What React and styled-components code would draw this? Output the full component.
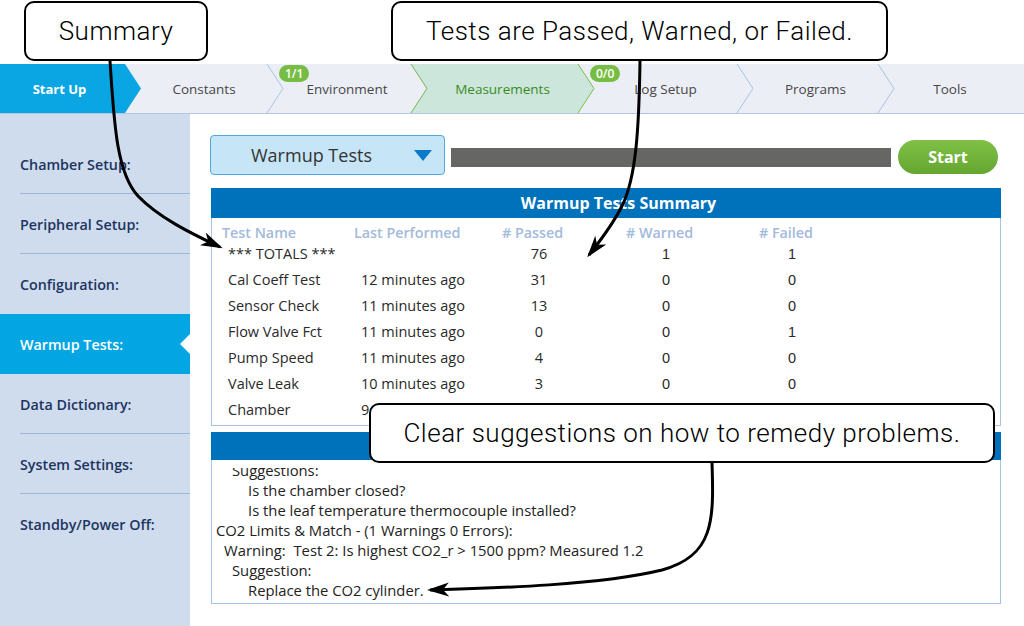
import React from 'react';
import styled, { createGlobalStyle, css } from 'styled-components';

const GlobalStyle = createGlobalStyle`
  * { box-sizing: border-box; }
  body {
    margin: 0;
    background: #fff;
    font-family: "Open Sans", "Liberation Sans", sans-serif;
  }
`;

const Page = styled.div`
  position: relative;
  width: 1024px;
  height: 626px;
  overflow: hidden;
  background: #fff;
`;

const CalloutStrip = styled.div`
  height: 64px;
  display: flex;
  align-items: flex-start;
  gap: 183px;
  padding: 1px 0 0 24px;
`;

const Callout = styled.div`
  width: ${p => p.$w}px;
  height: 60px;
  border: 2px solid #000;
  border-radius: 10px;
  background: #fff;
  display: flex;
  align-items: center;
  justify-content: center;
  font-family: Roboto, "Liberation Sans", sans-serif;
  font-size: 26px;
  font-weight: 300;
  letter-spacing: 0.5px;
  color: #000;
`;

const FloatingCallout = styled(Callout)`
  position: absolute;
  left: 369px;
  top: 403px;
  z-index: 3;
`;

const Arrows = styled.svg`
  position: absolute;
  left: 0;
  top: 0;
  z-index: 2;
  pointer-events: none;
`;

/* ---------- tab bar ---------- */

const TabBar = styled.div`
  display: flex;
  height: 50px;
  background: #eceef6;
  border-bottom: 1px solid #b3c7e2;
`;

const Tab = styled.div`
  position: relative;
  width: ${p => p.$w}px;
  height: 49px;
  display: flex;
  align-items: center;
  justify-content: center;
  padding-left: ${p => (p.$first ? 0 : 16)}px;
  padding-right: ${p => p.$padRight || 0}px;
  font-size: 13.5px;
  color: #474747;
  ${p => p.$kind === 'active' && css`
    color: #fff;
    font-weight: 700;
    font-size: 13px;
  `}
  ${p => p.$kind === 'done' && css`
    color: #3b8a1d;
  `}
`;

const TabShape = styled.svg`
  position: absolute;
  left: 0;
  top: 0;
  overflow: visible;
  pointer-events: none;
`;

const TabLabel = styled.span`
  position: relative;
  z-index: 1;
`;

const Badge = styled.span`
  position: absolute;
  left: 12px;
  top: 1px;
  z-index: 2;
  height: 17px;
  padding: 0 6px;
  border-radius: 9px;
  background: #77bd43;
  color: #fff;
  font-size: 12px;
  font-weight: 600;
  line-height: 17px;
`;

/* ---------- body ---------- */

const Body = styled.div`
  display: flex;
  height: 512px;
`;

const Sidebar = styled.nav`
  width: 190px;
  flex-shrink: 0;
  background: #cfdcee;
  padding-top: 20px;
`;

const SideItem = styled.div`
  position: relative;
  height: 60px;
  display: flex;
  align-items: center;
  padding-left: 20px;
  font-size: 14.3px;
  font-weight: 600;
  color: ${p => (p.$active ? '#fff' : '#1d3460')};
  background: ${p => (p.$active ? '#03a5e3' : 'transparent')};
  ${p => p.$divider && css`
    &::after {
      content: '';
      position: absolute;
      left: 20px;
      right: 0;
      bottom: 0;
      height: 1px;
      background: #9fb5d5;
    }
  `}
  ${p => p.$active && css`
    &::after {
      content: '';
      position: absolute;
      right: 0;
      top: 20px;
      border-right: 10px solid #fff;
      border-top: 10px solid transparent;
      border-bottom: 10px solid transparent;
    }
  `}
`;

const Main = styled.main`
  flex: 1;
  padding: 21px 0 0 20px;
`;

const ControlRow = styled.div`
  display: flex;
  align-items: flex-start;
  height: 40px;
`;

const Dropdown = styled.div`
  width: 235px;
  height: 40px;
  display: flex;
  align-items: center;
  justify-content: space-between;
  padding: 0 12px 0 40px;
  background: #c6e6f8;
  border: 1px solid #4fa9df;
  border-radius: 4px;
  font-size: 18px;
  color: #333;
`;

const Progress = styled.div`
  width: 440px;
  height: 19px;
  margin: 13px 0 0 6px;
  background: #666664;
`;

const StartButton = styled.button`
  width: 100px;
  height: 34px;
  margin: 5px 0 0 7px;
  border: none;
  border-radius: 17px;
  background: linear-gradient(#7fc045, #65a631);
  color: #fff;
  font-family: "Open Sans", sans-serif;
  font-size: 16px;
  font-weight: 700;
`;

const Panel = styled.section`
  width: 790px;
  margin: ${p => p.$top}px 0 0 1px;
`;

const PanelHeader = styled.div`
  height: ${p => p.$h}px;
  display: flex;
  align-items: center;
  justify-content: center;
  padding-left: 25px;
  background: #0072bc;
  color: #fff;
  font-size: 16px;
  font-weight: 700;
`;

const PanelBody = styled.div`
  height: ${p => p.$h}px;
  border: 1px solid #a7c3e4;
  border-top: none;
  overflow: hidden;
  padding: ${p => p.$pad};
`;

const Grid = styled.div`
  display: grid;
  grid-template-columns: 132px 148px 124px 133px 66px;
  padding-left: 9px;
`;

const HeadCell = styled.div`
  height: 17px;
  line-height: 17px;
  font-size: 14.3px;
  font-weight: 600;
  color: #a2badb;
  white-space: nowrap;
`;

const Cell = styled.div`
  height: 26px;
  line-height: 26px;
  font-size: 14.5px;
  color: #2a2a2a;
  white-space: nowrap;
  padding-left: ${p => p.$pad || 0}px;
`;

const Num = styled.span`
  display: inline-block;
  width: ${p => p.$w}px;
  text-align: center;
  font-family: ${p => (p.$arial ? '"Liberation Sans", Arial' : '"Open Sans"')}, sans-serif;
`;

const Viewport = styled.div`
  height: 100%;
  overflow: hidden;
`;

const Lines = styled.div`
  margin-top: -8px;
`;

const Line = styled.div`
  height: 20px;
  line-height: 20px;
  font-size: 14.8px;
  color: #222;
  white-space: pre;
  padding-left: ${p => p.$indent}px;
`;

const tabs = [
  { label: 'Start Up', w: 125, kind: 'active', padRight: 6 },
  { label: 'Constants', w: 142 },
  { label: 'Environment', w: 144, badge: '1/1' },
  { label: 'Measurements', w: 167, kind: 'done' },
  { label: 'Log Setup', w: 159, badge: '0/0' },
  { label: 'Programs', w: 141 },
  { label: 'Tools', w: 146, last: true, padRight: 18 },
];

const sideItems = [
  'Chamber Setup:',
  'Peripheral Setup:',
  'Configuration:',
  'Warmup Tests:',
  'Data Dictionary:',
  'System Settings:',
  'Standby/Power Off:',
];
const activeSide = 3;

const rows = [
  ['*** TOTALS ***', '', 76, 1, 1],
  ['Cal Coeff Test', '12 minutes ago', 31, 0, 0],
  ['Sensor Check', '11 minutes ago', 13, 0, 0],
  ['Flow Valve Fct', '11 minutes ago', 0, 0, 1],
  ['Pump Speed', '11 minutes ago', 4, 0, 0],
  ['Valve Leak', '10 minutes ago', 3, 0, 0],
  ['Chamber', '9 minutes ago', 9, 0, 0],
];

const details = [
  [16, 'Suggestions:'],
  [32, 'Is the chamber closed?'],
  [32, 'Is the leaf temperature thermocouple installed?'],
  [0, 'CO2 Limits & Match - (1 Warnings 0 Errors):'],
  [8, 'Warning:  Test 2: Is highest CO2_r > 1500 ppm? Measured 1.2'],
  [16, 'Suggestion:'],
  [32, 'Replace the CO2 cylinder.'],
];

function TabItem({ tab, first }) {
  const { w, kind, last } = tab;
  let shape = null;
  if (kind === 'active') {
    shape = <polygon points={`0,0 ${w},0 ${w + 16},24.5 ${w},49 0,49`} fill="#0aa5e3" />;
  } else if (kind === 'done') {
    shape = (
      <>
        <polygon points={`0,0 ${w},0 ${w + 16},24.5 ${w},49 0,49 16,24.5`} fill="#cde6dc" />
        <polyline points="0,0 16,24.5 0,49" fill="none" stroke="#7dbf4c" />
        <polyline points={`${w},0 ${w + 16},24.5 ${w},49`} fill="none" stroke="#7dbf4c" />
      </>
    );
  } else if (!last) {
    shape = <polyline points={`${w},0 ${w + 16},24.5 ${w},49`} fill="none" stroke="#a9c3e3" />;
  }
  return (
    <Tab $w={w} $kind={kind} $first={first} $padRight={tab.padRight}>
      <TabShape width={w + 16} height={49}>{shape}</TabShape>
      {tab.badge && <Badge>{tab.badge}</Badge>}
      <TabLabel>{tab.label}</TabLabel>
    </Tab>
  );
}

export default function App() {
  return (
    <Page>
      <GlobalStyle />
      <CalloutStrip>
        <Callout $w={184}>Summary</Callout>
        <Callout $w={497}>Tests are Passed, Warned, or Failed.</Callout>
      </CalloutStrip>

      <TabBar>
        {tabs.map((t, i) => (
          <TabItem key={t.label} tab={t} first={i === 0} />
        ))}
      </TabBar>

      <Body>
        <Sidebar>
          {sideItems.map((label, i) => {
            const isActive = i === activeSide;
            const divider = !isActive && i !== activeSide - 1 && i !== sideItems.length - 1;
            return (
              <SideItem key={label} $active={isActive} $divider={divider}>
                {label}
              </SideItem>
            );
          })}
        </Sidebar>

        <Main>
          <ControlRow>
            <Dropdown>
              <span>Warmup Tests</span>
              <svg width="18" height="11" viewBox="0 0 18 11">
                <polygon points="0,0 18,0 9,11" fill="#0b7acb" />
              </svg>
            </Dropdown>
            <Progress />
            <StartButton>Start</StartButton>
          </ControlRow>

          <Panel $top={13}>
            <PanelHeader $h={30}>Warmup Tests Summary</PanelHeader>
            <PanelBody $h={208} $pad="6px 0 0 1px">
              <Grid>
                <HeadCell>Test Name</HeadCell>
                <HeadCell>Last Performed</HeadCell>
                <HeadCell># Passed</HeadCell>
                <HeadCell># Warned</HeadCell>
                <HeadCell># Failed</HeadCell>
                {rows.map(r => (
                  <React.Fragment key={r[0]}>
                    <Cell $pad={6}>{r[0]}</Cell>
                    <Cell $pad={7}>{r[1]}</Cell>
                    <Cell><Num $w={74}>{r[2]}</Num></Cell>
                    <Cell><Num $w={80} $arial>{r[3]}</Num></Cell>
                    <Cell><Num $w={66} $arial>{r[4]}</Num></Cell>
                  </React.Fragment>
                ))}
              </Grid>
            </PanelBody>
          </Panel>

          <Panel $top={6}>
            <PanelHeader $h={28} />
            <PanelBody $h={144} $pad="8px 0 0 4px">
              <Viewport>
                <Lines>
                  {details.map(([indent, text]) => (
                    <Line key={text} $indent={indent}>{text}</Line>
                  ))}
                </Lines>
              </Viewport>
            </PanelBody>
          </Panel>
        </Main>
      </Body>

      <Arrows width="1024" height="626" viewBox="0 0 1024 626">
        <defs>
          <marker id="head" markerWidth="22" markerHeight="16" refX="19" refY="8"
            orient="auto" markerUnits="userSpaceOnUse">
            <path d="M0,1 L22,8 L0,15 L6,8 Z" fill="#000" />
          </marker>
        </defs>
        <g fill="none" stroke="#000" strokeWidth="3" markerEnd="url(#head)">
          <path d="M110 61 C114 120 116 172 138 196 C158 217 190 233 220 247" />
          <path d="M640 61 C639 130 636 178 622 206 C612 226 600 241 589 255" />
          <path d="M712 463 C714 520 714 556 662 570 C600 585 500 588 430 590" />
        </g>
      </Arrows>

      <FloatingCallout $w={626}>Clear suggestions on how to remedy problems.</FloatingCallout>
    </Page>
  );
}
